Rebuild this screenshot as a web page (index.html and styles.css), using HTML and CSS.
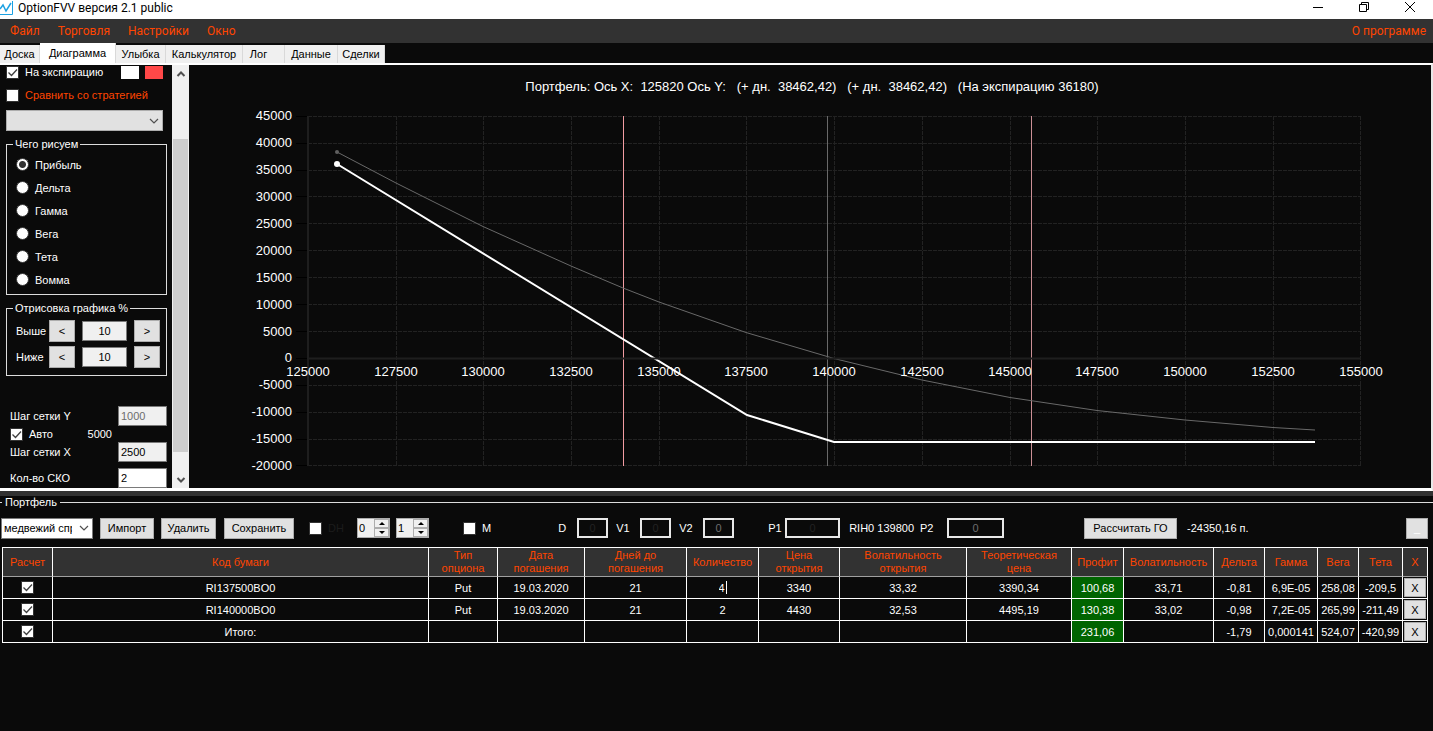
FILE: index.html
```html
<!DOCTYPE html>
<html lang="ru">
<head>
    <meta charset="UTF-8">
    <meta name="viewport" content="width=device-width, initial-scale=1.0">
    <title>OptionFVV версия 2.1 public</title>
    <link rel="stylesheet" href="styles.css">
</head>
<body>
    <header class="titlebar">
        <svg class="app-icon" width="14" height="16" viewBox="0 0 14 16">
            <path d="M0 14.5H12.5V1" fill="none" stroke="#1ba1e2" stroke-width="1"/>
            <path d="M0 9L3 5L6 11L11 3" fill="none" stroke="#1ba1e2" stroke-width="1.5"/>
        </svg>
        <h1>OptionFVV версия 2.1 public</h1>
        <div class="window-buttons">
            <button type="button" aria-label="Свернуть"><svg width="12" height="12"><path d="M1 6.5H11" stroke="#000"/></svg></button>
            <button type="button" aria-label="Развернуть"><svg width="12" height="12" fill="none" stroke="#000"><path d="M1.5 3.5H8.5V10.5H1.5ZM3.5 3.5V1.5H10.5V8.5H8.5"/></svg></button>
            <button type="button" aria-label="Закрыть"><svg width="12" height="12"><path d="M1 1L11 11M11 1L1 11" stroke="#000"/></svg></button>
        </div>
    </header>

    <nav class="menu">
        <a href="#">Файл</a>
        <a href="#">Торговля</a>
        <a href="#">Настройки</a>
        <a href="#">Окно</a>
        <a href="#" class="about">О программе</a>
    </nav>

    <div class="tabs">
        <button type="button" class="tab tab-board">Доска</button>
        <button type="button" class="tab tab-chart active">Диаграмма</button>
        <button type="button" class="tab tab-smile">Улыбка</button>
        <button type="button" class="tab tab-calc">Калькулятор</button>
        <button type="button" class="tab tab-log">Лог</button>
        <button type="button" class="tab tab-data">Данные</button>
        <button type="button" class="tab tab-deals">Сделки</button>
    </div>

    <main class="workspace">
        <aside class="sidebar">
            <div class="options">
                <div class="check-row first">
                    <input type="checkbox" id="expiration" checked>
                    <label for="expiration">На экспирацию</label>
                    <button type="button" class="swatch white" aria-label="Цвет линии"></button>
                    <button type="button" class="swatch red" aria-label="Цвет убытка"></button>
                </div>
                <div class="check-row">
                    <input type="checkbox" id="compare">
                    <label for="compare" class="accent">Сравнить со стратегией</label>
                </div>
                <select class="strategy" aria-label="Стратегия"><option></option></select>

                <fieldset class="group draw">
                    <legend>Чего рисуем</legend>
                    <label><input type="radio" name="draw" checked>Прибыль</label>
                    <label><input type="radio" name="draw">Дельта</label>
                    <label><input type="radio" name="draw">Гамма</label>
                    <label><input type="radio" name="draw">Вега</label>
                    <label><input type="radio" name="draw">Тета</label>
                    <label><input type="radio" name="draw">Вомма</label>
                </fieldset>

                <fieldset class="group range">
                    <legend>Отрисовка графика %</legend>
                    <div class="range-row">
                        <label for="above">Выше</label>
                        <button type="button" class="btn">&lt;</button>
                        <input type="text" id="above" value="10">
                        <button type="button" class="btn">&gt;</button>
                    </div>
                    <div class="range-row">
                        <label for="below">Ниже</label>
                        <button type="button" class="btn">&lt;</button>
                        <input type="text" id="below" value="10">
                        <button type="button" class="btn">&gt;</button>
                    </div>
                </fieldset>

                <div class="steps">
                    <div class="step-row">
                        <label for="stepY">Шаг сетки Y</label>
                        <input type="text" id="stepY" value="1000" disabled>
                    </div>
                    <div class="auto-row">
                        <input type="checkbox" id="auto" checked>
                        <label for="auto">Авто</label>
                        <span>5000</span>
                    </div>
                    <div class="step-row">
                        <label for="stepX">Шаг сетки X</label>
                        <input type="text" id="stepX" value="2500">
                    </div>
                    <div class="step-row last">
                        <label for="sko">Кол-во СКО</label>
                        <input type="text" id="sko" class="plain" value="2">
                    </div>
                </div>
            </div>
            <div class="scrollbar">
                <button type="button" aria-label="Вверх"><svg width="10" height="8"><path d="M1.5 6L5 2.5L8.5 6" fill="none" stroke="#505050" stroke-width="2"/></svg></button>
                <div class="track"><div class="thumb"></div></div>
                <button type="button" aria-label="Вниз"><svg width="10" height="8"><path d="M1.5 2L5 5.5L8.5 2" fill="none" stroke="#505050" stroke-width="2"/></svg></button>
            </div>
        </aside>

        <section class="chart">
            <svg viewBox="0 0 1242 423" role="img" aria-label="Портфель">
                <text class="chart-title" x="623" y="26">Портфель: Ось X:  125820 Ось Y:   (+ дн.  38462,42)   (+ дн.  38462,42)   (На экспирацию 36180)</text>

                <!-- grid -->
                <path class="grid" d="M119 51.5H1172M119 78.5H1172M119 105.5H1172M119 131.5H1172M119 158.5H1172M119 185.5H1172M119 212.5H1172M119 239.5H1172M119 266.5H1172M119 320.5H1172M119 347.5H1172M119 374.5H1172M119 400.5H1172"/>
                <path class="grid" d="M207.5 51V401M294.5 51V401M382.5 51V401M470.5 51V401M557.5 51V401M645.5 51V401M733.5 51V401M821.5 51V401M908.5 51V401M996.5 51V401M1084.5 51V401M1171.5 51V401"/>
                <path class="tick" d="M107 51.5H119M107 78.5H119M107 105.5H119M107 131.5H119M107 158.5H119M107 185.5H119M107 212.5H119M107 239.5H119M107 266.5H119M107 293.5H119M107 320.5H119M107 347.5H119M107 374.5H119M107 400.5H119"/>

                <!-- y axis -->
                <g class="axis-y">
                    <text x="103" y="55">45000</text>
                    <text x="103" y="82">40000</text>
                    <text x="103" y="109">35000</text>
                    <text x="103" y="136">30000</text>
                    <text x="103" y="163">25000</text>
                    <text x="103" y="190">20000</text>
                    <text x="103" y="217">15000</text>
                    <text x="103" y="244">10000</text>
                    <text x="103" y="271">5000</text>
                    <text x="103" y="297">0</text>
                    <text x="103" y="324">-5000</text>
                    <text x="103" y="351">-10000</text>
                    <text x="103" y="378">-15000</text>
                    <text x="103" y="405">-20000</text>
                </g>

                <!-- sigma and price lines -->
                <path class="sigma" d="M434.5 51V401"/>
                <path class="price" d="M638.5 51V401"/>
                <path class="sigma right" d="M842.5 51V401"/>

                <polyline class="today" points="148,87 207,118 294,161.5 382,201 434,223 470,237 557,267.5 645,293.5 733,315 821,332.5 908,345.5 996,355 1084,362.5 1126,365"/>
                <circle class="today-dot" cx="148" cy="87" r="2"/>
                <polyline class="expiry" points="148,99 558,350 645,377 1126,377"/>
                <circle class="expiry-dot" cx="148" cy="99" r="3"/>

                <path class="axis" d="M119 51V401M119 293.5H1172"/>

                <!-- x axis -->
                <g class="axis-x">
                    <text x="119" y="311">125000</text>
                    <text x="207" y="311">127500</text>
                    <text x="294" y="311">130000</text>
                    <text x="382" y="311">132500</text>
                    <text x="470" y="311">135000</text>
                    <text x="557" y="311">137500</text>
                    <text x="645" y="311">140000</text>
                    <text x="733" y="311">142500</text>
                    <text x="821" y="311">145000</text>
                    <text x="908" y="311">147500</text>
                    <text x="996" y="311">150000</text>
                    <text x="1084" y="311">152500</text>
                    <text x="1172" y="311">155000</text>
                </g>
            </svg>
        </section>
    </main>

    <section class="portfolio">
        <h2>Портфель</h2>
        <div class="toolbar">
            <select class="portfolio-select" aria-label="Портфель"><option>медвежий спрэд</option></select>
            <button type="button" class="btn import">Импорт</button>
            <button type="button" class="btn delete">Удалить</button>
            <button type="button" class="btn save">Сохранить</button>
            <label class="dh"><input type="checkbox">DH</label>
            <div class="spinner first-spin">
                <input type="text" value="0" aria-label="Часы">
                <div class="arrows"><button type="button" class="up" aria-label="Больше"></button><button type="button" class="down" aria-label="Меньше"></button></div>
            </div>
            <div class="spinner">
                <input type="text" value="1" aria-label="Шаг">
                <div class="arrows"><button type="button" class="up" aria-label="Больше"></button><button type="button" class="down" aria-label="Меньше"></button></div>
            </div>
            <label class="market"><input type="checkbox">M</label>
            <label class="param param-d">D <input type="text" value="0"></label>
            <label class="param param-v1">V1 <input type="text" value="0"></label>
            <label class="param param-v2">V2 <input type="text" class="light" value="0"></label>
            <label class="param param-p1">P1 <input type="text" value="0"></label>
            <span class="ticker">RIH0 139800</span>
            <label class="param param-p2">P2 <input type="text" class="light" value="0"></label>
            <button type="button" class="btn margin">Рассчитать ГО</button>
            <span class="margin-value">-24350,16 п.</span>
            <button type="button" class="btn collapse">_</button>
        </div>

        <table class="positions">
            <colgroup>
                <col class="w50"><col><col class="w69"><col class="w87"><col class="w102"><col class="w72"><col class="w81"><col class="w127">
                <col class="w105"><col class="w52"><col class="w90"><col class="w51"><col class="w53"><col class="w41"><col class="w44"><col class="w25">
            </colgroup>
            <thead>
                <tr>
                    <th>Расчет</th>
                    <th>Код бумаги</th>
                    <th>Тип<br>опциона</th>
                    <th>Дата<br>погашения</th>
                    <th>Дней до<br>погашения</th>
                    <th>Количество</th>
                    <th>Цена<br>открытия</th>
                    <th>Волатильность<br>открытия</th>
                    <th>Теоретическая<br>цена</th>
                    <th>Профит</th>
                    <th>Волатильность</th>
                    <th>Дельта</th>
                    <th>Гамма</th>
                    <th>Вега</th>
                    <th>Тета</th>
                    <th>X</th>
                </tr>
            </thead>
            <tbody>
                <tr>
                    <td><input type="checkbox" aria-label="Расчет RI137500BO0" checked></td>
                    <td>RI137500BO0</td>
                    <td>Put</td>
                    <td>19.03.2020</td>
                    <td>21</td>
                    <td><input type="text" class="cell-edit" value="4" aria-label="Количество"></td>
                    <td>3340</td>
                    <td>33,32</td>
                    <td>3390,34</td>
                    <td class="profit">100,68</td>
                    <td>33,71</td>
                    <td>-0,81</td>
                    <td>6,9E-05</td>
                    <td>258,08</td>
                    <td>-209,5</td>
                    <td class="remove"><button type="button" class="btn">X</button></td>
                </tr>
                <tr>
                    <td><input type="checkbox" aria-label="Расчет RI140000BO0" checked></td>
                    <td>RI140000BO0</td>
                    <td>Put</td>
                    <td>19.03.2020</td>
                    <td>21</td>
                    <td>2</td>
                    <td>4430</td>
                    <td>32,53</td>
                    <td>4495,19</td>
                    <td class="profit">130,38</td>
                    <td>33,02</td>
                    <td>-0,98</td>
                    <td>7,2E-05</td>
                    <td>265,99</td>
                    <td>-211,49</td>
                    <td class="remove"><button type="button" class="btn">X</button></td>
                </tr>
                <tr>
                    <td><input type="checkbox" aria-label="Расчет итого" checked></td>
                    <td>Итого:</td>
                    <td></td>
                    <td></td>
                    <td></td>
                    <td></td>
                    <td></td>
                    <td></td>
                    <td></td>
                    <td class="profit">231,06</td>
                    <td></td>
                    <td>-1,79</td>
                    <td>0,000141</td>
                    <td>524,07</td>
                    <td>-420,99</td>
                    <td class="remove"><button type="button" class="btn">X</button></td>
                </tr>
            </tbody>
        </table>
    </section>
</body>
</html>
```
FILE: styles.css
```css
* {
    box-sizing: border-box;
}
body {
    margin: 0;
    min-height: 100vh;
    background-color: #0a0a0a;
    color: #ffffff;
    font-family: "Liberation Sans", Arial, sans-serif;
    font-size: 11px;
    line-height: 14px;
}
input, button, select {
    font: inherit;
    margin: 0;
    padding: 0;
    border-radius: 0;
}

/* title bar and menu */
.titlebar {
    display: flex;
    align-items: center;
    height: 19px;
    background-color: #ffffff;
    color: #000000;
}
.titlebar h1 {
    margin: 0 0 3px 4px;
    font-family: Roboto, "Noto Sans", sans-serif;
    font-size: 12px;
    font-weight: 400;
}
.app-icon {
    margin-bottom: 3px;
}
.window-buttons {
    display: flex;
    margin-left: auto;
    margin-bottom: 6px;
}
.window-buttons button {
    width: 46px;
    height: 12px;
    border: none;
    background: none;
}
.window-buttons svg {
    display: block;
    margin: 0 auto;
}
.menu {
    display: flex;
    align-items: center;
    gap: 18px;
    height: 24px;
    padding: 0 7px 0 10px;
    background-color: #323232;
    font-family: Roboto, "Noto Sans", sans-serif;
    font-size: 12px;
}
.menu a {
    color: #ff4500;
    text-decoration: none;
}
.menu .about {
    margin-left: auto;
}

/* tabs */
.tabs {
    display: flex;
    align-items: flex-end;
    height: 20px;
}
.tab {
    height: 18px;
    border: none;
    border-right: 1px solid #d9d9d9;
    background-color: #f0f0f0;
    color: #000000;
}
.tab.active {
    height: 20px;
    background-color: #ffffff;
}
.tab-board {
    width: 40px;
}
.tab-chart {
    width: 76px;
}
.tab-smile {
    width: 50px;
}
.tab-calc {
    width: 77px;
}
.tab-log {
    width: 42px;
    padding-right: 10px;
}
.tab-data {
    width: 53px;
}
.tab-deals {
    width: 47px;
}

/* chart tab */
.workspace {
    display: flex;
    border-top: 2px solid #ffffff;
    border-right: 2px solid #e8e8e8;
    border-bottom: 3px solid #ffffff;
}
.sidebar {
    display: flex;
    flex: 0 0 189px;
}
.options {
    flex: 1;
    height: 423px;
    padding: 0 5px 0 6px;
    overflow: hidden;
}
.check-row {
    display: flex;
    align-items: center;
    height: 24px;
}
.check-row.first {
    height: 18px;
    padding-bottom: 4px;
}
.check-row label {
    margin-left: 6px;
}
.accent {
    color: #ff4500;
}
.swatch {
    width: 18px;
    height: 13px;
    border: none;
}
.swatch.white {
    margin-left: auto;
    background-color: #ffffff;
}
.swatch.red {
    margin: 0 4px 0 6px;
    background-color: #ff4848;
}
input[type="checkbox"] {
    appearance: none;
    flex: none;
    width: 13px;
    height: 13px;
    border: 1px solid #333333;
    background-color: #ffffff;
}
input[type="checkbox"]:checked {
    background-image: url("data:image/svg+xml,%3Csvg xmlns='http://www.w3.org/2000/svg' width='11' height='11'%3E%3Cpath d='M1.5 5.5L4.5 8.5L10 2.5' fill='none' stroke='%23404040' stroke-width='1.3'/%3E%3C/svg%3E");
}
select {
    appearance: none;
    border: 1px solid #adadad;
    background: #e1e1e1 url("data:image/svg+xml,%3Csvg xmlns='http://www.w3.org/2000/svg' width='10' height='6'%3E%3Cpath d='M1 1L5 5L9 1' fill='none' stroke='%23505050' stroke-width='1.2'/%3E%3C/svg%3E") no-repeat right 3px center;
}
.strategy {
    display: block;
    width: 157px;
    height: 21px;
    margin-top: 3px;
}
.group {
    margin: 6px 0 0;
    padding: 0 0 0 9px;
    border: 1px solid #dcdcdc;
}
.group legend {
    margin-left: -3px;
    padding: 0 2px;
}
.draw {
    height: 158px;
}
.draw label {
    display: flex;
    align-items: center;
    gap: 6px;
    height: 23px;
}
.draw legend + label {
    margin-top: 2px;
}
.draw input {
    appearance: none;
    width: 13px;
    height: 13px;
    border: 1px solid #333333;
    border-radius: 50%;
    background-color: #ffffff;
}
.draw input:checked {
    background-image: radial-gradient(circle, #333333 3px, #ffffff 4px);
}
.range {
    height: 75px;
    padding-top: 2px;
}
.range-row {
    display: flex;
    align-items: center;
    height: 22px;
    margin: 3px 6px 4px 0;
}
.range-row label {
    width: 33px;
}
.range-row input {
    width: 45px;
    height: 20px;
    margin: 0 7px;
    border: 1px solid #7a7a7a;
    background-color: #f0f0f0;
    text-align: center;
}
.btn {
    border: 1px solid #adadad;
    background-color: #e1e1e1;
    color: #000000;
}
.range-row .btn {
    width: 26px;
    height: 22px;
}
.steps {
    padding: 30px 0 0 4px;
}
.step-row {
    display: flex;
    align-items: center;
    justify-content: space-between;
    height: 20px;
}
.step-row.last {
    margin-top: 6px;
}
.step-row input {
    width: 49px;
    height: 20px;
    padding-left: 2px;
    border: 1px solid #7a7a7a;
    background-color: #f0f0f0;
    color: #000000;
}
.step-row input:disabled {
    color: #6d6d6d;
}
.step-row .plain {
    background-color: #ffffff;
}
.auto-row {
    display: flex;
    align-items: center;
    gap: 6px;
    height: 16px;
}
.auto-row span {
    margin: 0 55px 0 auto;
}
.scrollbar {
    display: flex;
    flex-direction: column;
    width: 17px;
    background-color: #f0f0f0;
}
.scrollbar button {
    height: 17px;
    border: none;
    background: none;
}
.scrollbar svg {
    display: block;
    margin: 0 auto;
}
.track {
    flex: 1;
    padding: 57px 1px 19px;
}
.thumb {
    height: 100%;
    background-color: #cdcdcd;
}

/* chart */
.chart {
    flex: 1;
    min-width: 0;
}
.chart svg {
    display: block;
    width: 100%;
}
.chart text {
    fill: #ffffff;
    font-size: 13px;
}
.chart .chart-title {
    text-anchor: middle;
    white-space: pre;
}
.axis-x {
    text-anchor: middle;
}
.axis-y {
    text-anchor: end;
}
.grid {
    stroke: #222222;
    stroke-dasharray: 4 1;
}
.tick {
    stroke: #000000;
}
.axis {
    fill: none;
    stroke: #1e1e1e;
    stroke-width: 2;
}
.sigma {
    stroke: #f29ca2;
}
.sigma.right {
    stroke: #cc9096;
}
.price {
    stroke: #696969;
}
.today {
    fill: none;
    stroke: #696969;
}
.today-dot {
    fill: #606060;
}
.expiry {
    fill: none;
    stroke: #ffffff;
    stroke-width: 2;
}
.expiry-dot {
    fill: #ffffff;
}

/* portfolio */
.portfolio {
    border-top: 5px solid #323232;
}
.portfolio h2 {
    display: flex;
    align-items: center;
    gap: 3px;
    margin: 0;
    font-size: 11px;
    font-weight: 400;
    line-height: 13px;
}
.portfolio h2::before {
    content: "";
    width: 2px;
    border-top: 1px solid #dcdcdc;
}
.portfolio h2::after {
    content: "";
    flex: 1;
    border-top: 1px solid #dcdcdc;
}
.toolbar {
    display: flex;
    align-items: center;
    height: 38px;
    padding: 0 5px 0 1px;
    white-space: nowrap;
}
.toolbar .btn {
    height: 21px;
}
.portfolio-select {
    width: 92px;
    height: 21px;
    padding: 0 20px 0 2px;
    border-color: #7a7a7a;
    background-color: #ffffff;
    color: #000000;
}
.import {
    width: 54px;
    margin-left: 7px;
}
.delete {
    width: 55px;
    margin-left: 7px;
}
.save {
    width: 70px;
    margin-left: 8px;
}
.dh, .market {
    display: flex;
    align-items: center;
    gap: 6px;
}
.dh {
    width: 48px;
    margin-left: 15px;
    color: #1c1c1c;
}
.spinner {
    display: flex;
    width: 33px;
    height: 20px;
    margin-left: 6px;
    border: 1px solid #adadad;
    background-color: #f0f0f0;
}
.spinner.first-spin {
    margin-left: 0;
}
.spinner input {
    width: 16px;
    padding-left: 1px;
    border: none;
    background: none;
}
.arrows {
    display: flex;
    flex: 1;
    flex-direction: column;
}
.arrows button {
    flex: 1;
    border: 1px solid #adadad;
    background-color: #f0f0f0;
}
.arrows button::before {
    content: "";
    display: block;
    width: 0;
    margin: 0 auto;
    border: 3px solid transparent;
}
.arrows .up::before {
    border-top: none;
    border-bottom-color: #000000;
}
.arrows .down::before {
    border-bottom: none;
    border-top-color: #000000;
}
.market {
    margin-left: 34px;
}
.param {
    display: flex;
    align-items: center;
    justify-content: space-between;
}
.param input {
    width: 31px;
    height: 20px;
    border: 2px solid #e8e8e8;
    background-color: #0a0a0a;
    color: #222222;
    text-align: center;
}
.param .light {
    color: #6d6d6d;
}
.param-d {
    width: 50px;
    margin-left: 67px;
}
.param-v1, .param-v2 {
    width: 55px;
    margin-left: 8px;
}
.param-p1 {
    width: 72px;
    margin-left: 34px;
}
.param-p1 input {
    width: 55px;
}
.ticker {
    margin-left: 9px;
}
.param-p2 {
    width: 84px;
    margin-left: 6px;
}
.param-p2 input {
    width: 57px;
}
.margin {
    width: 93px;
    margin-left: 80px;
}
.margin-value {
    margin-left: 10px;
}
.collapse {
    width: 22px;
    margin-left: auto;
    color: #ffffff;
}

/* positions table */
.positions {
    width: calc(100% - 7px);
    margin-left: 2px;
    border: 1px solid #ffffff;
    border-width: 1px 0 0 1px;
    border-spacing: 0;
    table-layout: fixed;
    text-align: center;
}
.positions th {
    height: 29px;
    padding: 0;
    border-right: 1px solid #ffffff;
    border-bottom: 1px solid #a0a0a0;
    background-color: #323232;
    color: #ff4500;
    font-weight: 400;
    line-height: 13px;
}
.positions td {
    height: 22px;
    padding: 0;
    border-right: 1px solid #ffffff;
    border-bottom: 1px solid #ffffff;
}
.positions input[type="checkbox"] {
    display: block;
    margin: 0 auto;
}
.positions .profit {
    background-color: #006400;
}
.cell-edit {
    width: 8px;
    height: 13px;
    border: none;
    border-right: 1px solid #ffffff;
    background: none;
    color: #ffffff;
}
.remove .btn {
    display: block;
    width: 22px;
    height: 19px;
    margin: 0 auto;
}
.w25 {
    width: 25px;
}
.w41 {
    width: 41px;
}
.w44 {
    width: 44px;
}
.w50 {
    width: 50px;
}
.w51 {
    width: 51px;
}
.w52 {
    width: 52px;
}
.w53 {
    width: 53px;
}
.w69 {
    width: 69px;
}
.w72 {
    width: 72px;
}
.w81 {
    width: 81px;
}
.w87 {
    width: 87px;
}
.w90 {
    width: 90px;
}
.w102 {
    width: 102px;
}
.w105 {
    width: 105px;
}
.w127 {
    width: 127px;
}
```
